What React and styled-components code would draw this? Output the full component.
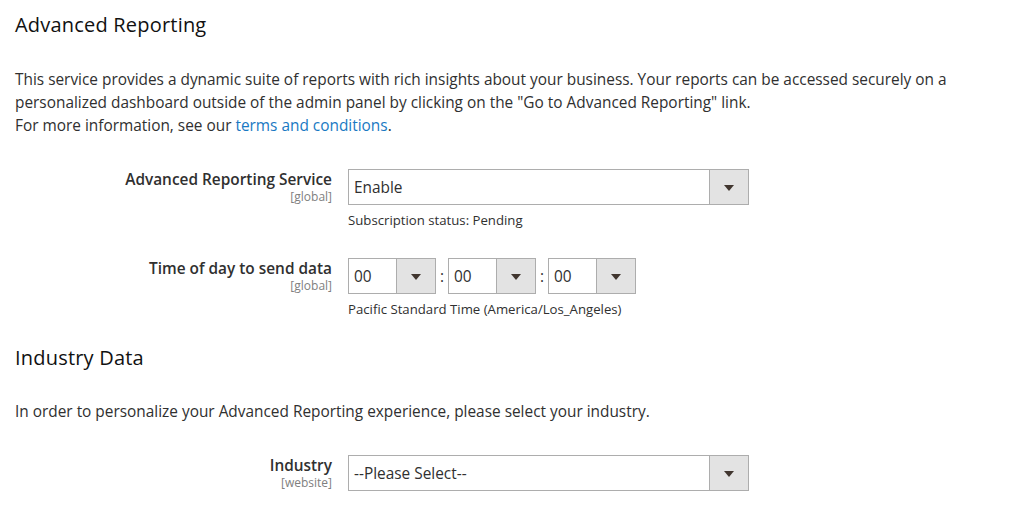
import React from 'react';
import styled, { createGlobalStyle } from 'styled-components';

const GlobalStyle = createGlobalStyle`
  html, body {
    margin: 0;
    padding: 0;
    background: #fff;
  }
  body {
    font-family: 'Open Sans', 'Liberation Sans', sans-serif;
    color: #303030;
  }
`;

const Page = styled.div`
  padding: 12px 15px 0 15px;
`;

const SectionTitle = styled.h2`
  margin: ${(p) => p.top || 0}px 0 0;
  font-size: 20px;
  font-weight: 500;
  line-height: 26px;
  color: #111;
  letter-spacing: 0.2px;
`;

const Intro = styled.p`
  margin: ${(p) => p.top || 30}px 0 0;
  font-size: 15.4px;
  line-height: 23px;
  color: #303030;
`;

const TermsLink = styled.a`
  color: #1979c3;
  text-decoration: none;
`;

const Field = styled.div`
  display: grid;
  grid-template-columns: 317px 401px;
  column-gap: 16px;
  margin-top: ${(p) => p.top}px;
`;

const Label = styled.div`
  text-align: right;
  padding-top: 2px;
`;

const LabelText = styled.div`
  font-size: 15.4px;
  font-weight: 600;
  line-height: 18px;
  color: #303030;
`;

const Scope = styled.div`
  font-size: 12px;
  line-height: 15px;
  color: #808080;
`;

const Control = styled.div`
  display: flex;
  flex-direction: column;
`;

const SelectBox = styled.div`
  display: flex;
  width: ${(p) => p.width}px;
  height: 36px;
  box-sizing: border-box;
  border: 1px solid #adadad;
  background: #fff;
`;

const SelectValue = styled.div`
  flex: 1;
  padding-left: 5px;
  display: flex;
  align-items: center;
  font-size: 15.4px;
  color: #303030;
`;

const ArrowBox = styled.div`
  width: 38px;
  background: #e3e3e3;
  border-left: 1px solid #adadad;
  display: flex;
  align-items: center;
  justify-content: center;
`;

const Arrow = styled.span`
  width: 0;
  height: 0;
  border-left: 5px solid transparent;
  border-right: 5px solid transparent;
  border-top: 6px solid #41362f;
  margin-top: 1px;
`;

const Note = styled.div`
  margin-top: 6px;
  font-size: 13.2px;
  line-height: 18px;
  color: #303030;
`;

const TimeRow = styled.div`
  display: flex;
  align-items: center;
`;

const Colon = styled.span`
  width: 12px;
  text-align: center;
  font-size: 15.4px;
  color: #303030;
`;

const Select = ({ value, width }) => (
  <SelectBox width={width}>
    <SelectValue>{value}</SelectValue>
    <ArrowBox>
      <Arrow />
    </ArrowBox>
  </SelectBox>
);

export default function App() {
  return (
    <Page>
      <GlobalStyle />
      <SectionTitle>Advanced Reporting</SectionTitle>
      <Intro>
        This service provides a dynamic suite of reports with rich insights about your business. Your reports can be
        accessed securely on a personalized dashboard outside of the admin panel by clicking on the "Go to Advanced
        Reporting" link.
        <br />
        For more information, see our <TermsLink href="#">terms and conditions</TermsLink>.
      </Intro>

      <Field top={32}>
        <Label>
          <LabelText>Advanced Reporting Service</LabelText>
          <Scope>[global]</Scope>
        </Label>
        <Control>
          <Select value="Enable" width={401} />
          <Note>Subscription status: Pending</Note>
        </Control>
      </Field>

      <Field top={29}>
        <Label>
          <LabelText>Time of day to send data</LabelText>
          <Scope>[global]</Scope>
        </Label>
        <Control>
          <TimeRow>
            <Select value="00" width={88} />
            <Colon>:</Colon>
            <Select value="00" width={88} />
            <Colon>:</Colon>
            <Select value="00" width={88} />
          </TimeRow>
          <Note>Pacific Standard Time (America/Los_Angeles)</Note>
        </Control>
      </Field>

      <SectionTitle top={27}>Industry Data</SectionTitle>
      <Intro top={29}>
        In order to personalize your Advanced Reporting experience, please select your industry.
      </Intro>

      <Field top={32}>
        <Label>
          <LabelText>Industry</LabelText>
          <Scope>[website]</Scope>
        </Label>
        <Control>
          <Select value="--Please Select--" width={401} />
        </Control>
      </Field>
    </Page>
  );
}
